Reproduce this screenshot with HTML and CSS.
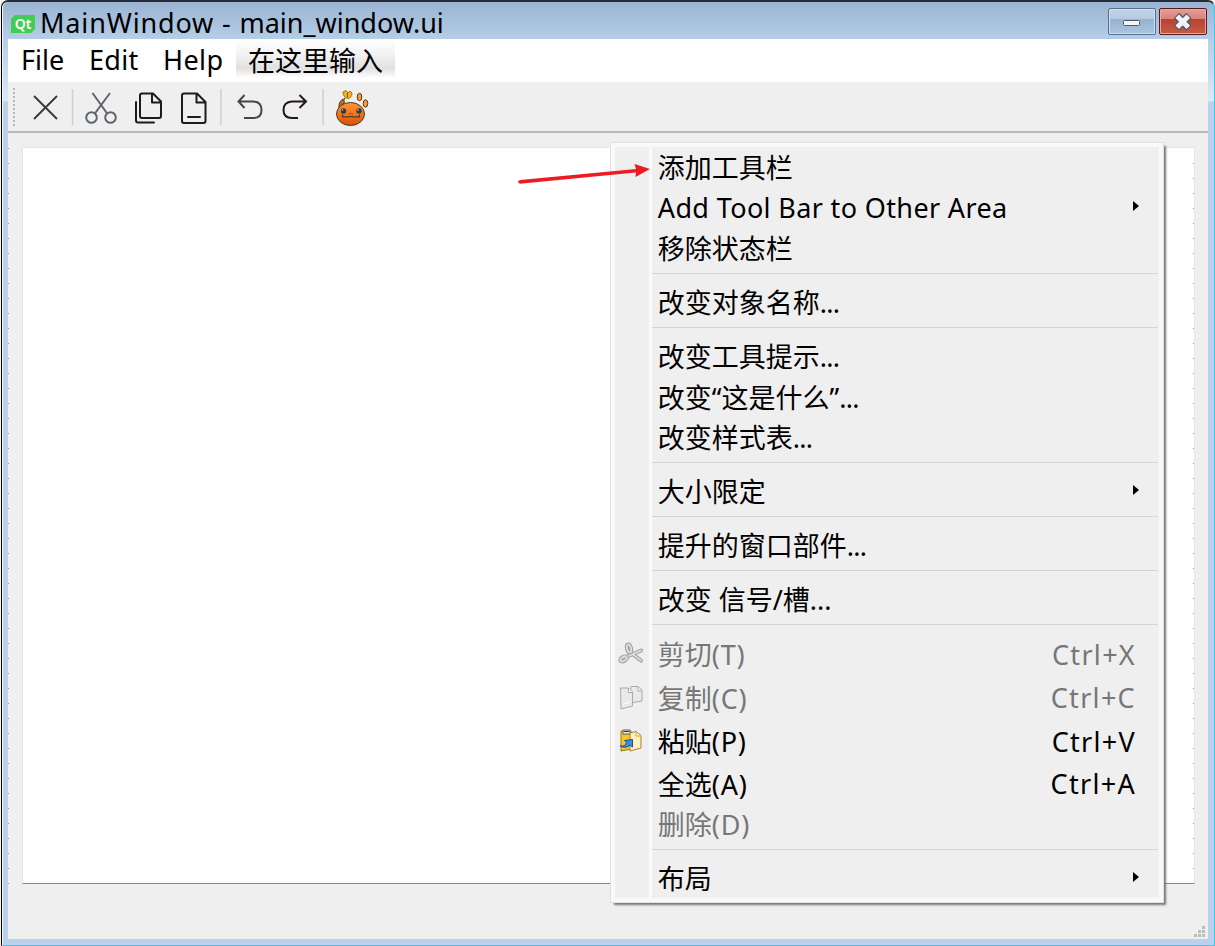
FILE: index.html
```
<!DOCTYPE html>
<html lang="zh-CN">
<head>
<meta charset="utf-8">
<title>MainWindow - main_window.ui</title>
<link rel="stylesheet" href="styles.css">
</head>
<body>
<div class="window">
  <header class="titlebar">
    <svg class="qt" width="24" height="18" viewBox="0 0 24 18"><path d="M4 0H24V14L20 18H0V4Z" fill="#41cd52"/><text x="12" y="13.500" text-anchor="middle" class="qt-text">Qt</text></svg>
    <span class="title"><span class="app">MainWindow - </span>main_window.ui</span>
    <div class="controls">
      <div class="control minimize"><svg width="46" height="25" viewBox="0 0 46 25"><rect x="14.500" y="11.500" width="16" height="5" rx="1" fill="#f5f5f5" stroke="#53566b"/></svg></div>
      <div class="control close"><svg width="46" height="25" viewBox="0 0 46 25"><path d="M16.500 6.500L29 19M29 6.500L16.500 19" stroke="#54566b" stroke-width="7.500"/><path d="M17.200 7.200L28.300 18.300M28.300 7.200L17.200 18.300" stroke="#f3f3f3" stroke-width="5"/></svg></div>
    </div>
  </header>
  <main class="client">
    <nav class="menubar"><span class="m-file">File</span><span class="m-edit">Edit</span><span class="m-help">Help</span><span class="m-type">在这里输入</span></nav>
    <div class="toolbar">
      <svg width="380" height="49" viewBox="8 82 380 49" fill="none">
        <path d="M14 88V127" stroke="#b4b4b4" stroke-width="2" stroke-dasharray="2 2"/>
        <path d="M72.500 89V125M221 89V125M323 89V125" stroke="#cfcfcf" stroke-width="1.500"/>
        <path d="M34 96L57 119M57 96L34 119" stroke="#3a3a3c" stroke-width="1.900"/>
        <g stroke="#5f656f" stroke-width="2"><path d="M92.500 93L107.500 114M110 93L94.500 114"/><circle cx="91.500" cy="117.500" r="5.300"/><circle cx="110.500" cy="117.500" r="5.300"/></g>
        <g stroke="#1c1c1e" stroke-width="2" stroke-linejoin="round" stroke-linecap="round"><path d="M142 93.500H153L161 101.500V116Q161 118 159 118H142Q140 118 140 116V95.500Q140 93.500 142 93.500ZM152 94V102.500H160.500M136 102V120.500Q136 122.500 138 122.500H154"/><path d="M184 93.500H197L205.500 102V121Q205.500 123 203.500 123H184Q182 123 182 121V95.500Q182 93.500 184 93.500ZM196.500 94V102.500H205M188 117H200"/></g>
        <g stroke-width="2"><path d="M244.500 95L238.500 101.500L244.500 108M239 101.500H253.500Q261.500 102 261.500 110Q261.500 118 253.500 118H244" stroke="#47474a"/><path d="M299.500 95L306 101.500L299.500 108M305 101.500H292Q283.500 102 283.500 110Q283.500 118 292 118H298" stroke="#241819"/></g>
        <g stroke="#4b3b31" stroke-width="1"><path d="M339 109Q338 102 343 99L344.500 102Q342 104 343 108Z" fill="#ce6619"/><path d="M343 92L346 90.500L348 93L350 91L352 93Q352 98 347.500 98.500Q343 97 343 92Z" fill="#f6ae1b" stroke="#a5741c"/><path d="M347.500 93V97.500" stroke="#716019"/><path d="M345 98L343 101" stroke="#716019" stroke-width="1.500"/><ellipse cx="359.500" cy="97" rx="2.300" ry="3.700" fill="#ff9f16"/><ellipse cx="365.500" cy="103.500" rx="2.300" ry="3.700" fill="#ff9f16"/><ellipse cx="350.500" cy="114" rx="14" ry="11.500" fill="url(#orange)"/></g>
        <circle cx="343.500" cy="111" r="2.700" fill="#273d4c"/><circle cx="359" cy="111" r="2.700" fill="#273d4c"/><circle cx="342.500" cy="110" r=".8" fill="#a9d4e8"/><circle cx="358" cy="110" r=".8" fill="#a9d4e8"/>
        <path d="M342.500 114.500V117.500M359.500 114.500V117.500M342.500 116.500Q346 117.500 350.500 116.500Q355 117.500 359.500 116.500" stroke="#363b3d" stroke-width="1.200"/><path d="M348 114.500L350.500 113L353 114.500" stroke="#c84a0d"/>
        <defs><linearGradient id="orange" x2="0" y2="1"><stop stop-color="#ff9630"/><stop offset=".45" stop-color="#f77818"/><stop offset="1" stop-color="#d94e09"/></linearGradient></defs>
      </svg>
    </div>
    <div class="workspace"><i class="ticks"></i><div class="form"><i class="ticks right"></i></div></div>
    <svg class="grip" width="12" height="12" fill="#bdbdbd"><path d="M8 0h3v3h-3zM4 4h3v3h-3zM8 4h3v3h-3zM0 8h3v3h-3zM4 8h3v3h-3zM8 8h3v3h-3z"/></svg>
  </main>
</div>
<div class="popup">
  <div class="item"><span>添加工具栏</span></div>
  <div class="item"><span class="add">Add Tool Bar to Other Area</span><svg class="arrow" width="6" height="10"><path d="M0 0L6 5L0 10Z"/></svg></div>
  <div class="item"><span>移除状态栏</span></div>
  <div class="sep"></div>
  <div class="item"><span>改变对象名称<b>...</b></span></div>
  <div class="sep"></div>
  <div class="item"><span>改变工具提示<b>...</b></span></div>
  <div class="item"><span>改变“这是什么”<b>...</b></span></div>
  <div class="item"><span>改变样式表<b>...</b></span></div>
  <div class="sep"></div>
  <div class="item"><span>大小限定</span><svg class="arrow" width="6" height="10"><path d="M0 0L6 5L0 10Z"/></svg></div>
  <div class="sep"></div>
  <div class="item"><span>提升的窗口部件<b>...</b></span></div>
  <div class="sep"></div>
  <div class="item"><span>改变 信号/槽...</span></div>
  <div class="sep"></div>
  <div class="item tall disabled"><svg class="icon" width="26" height="26" viewBox="0 0 26 26" fill="none" stroke-linecap="round"><g stroke="#9c9c9c" stroke-width="4"><path d="M13 12L23 19.500M23 9.500L8 16"/></g><g stroke="#dadada" stroke-width="2"><path d="M13 12L23 19.500M23 9.500L8 16"/></g><g stroke="#9c9c9c" stroke-width="4"><ellipse cx="11" cy="7.500" rx="2" ry="4" transform="rotate(-15 11 7.500)"/><ellipse cx="5.500" cy="18" rx="3.500" ry="2" transform="rotate(-30 5.500 18)"/></g><g stroke="#dcdcdc" stroke-width="2"><ellipse cx="11" cy="7.500" rx="2" ry="4" transform="rotate(-15 11 7.500)"/><ellipse cx="5.500" cy="18" rx="3.500" ry="2" transform="rotate(-30 5.500 18)"/></g></svg><span>剪切<b class="mnemonic">(T)</b></span><span class="key">Ctrl+X</span></div>
  <div class="item tall disabled"><svg class="icon" width="26" height="26" viewBox="0 0 26 26" stroke="#aaa" fill="#e9e9e9"><path d="M13 1.500H20L24 5V16L12 18Z"/><path d="M20 2V6H24" fill="#fafafa"/><path d="M2.500 3H10.500L14.500 7V21L3 24Z"/><path d="M10.500 3V7.500H14.500" fill="#fafafa"/><path d="M5 19L12 17" stroke="#fff"/></svg><span>复制<b class="mnemonic">(C)</b></span><span class="key">Ctrl+C</span></div>
  <div class="item tall"><svg class="icon" width="26" height="26" viewBox="0 0 26 26"><path d="M3 3H13V21L3 23Z" fill="#f1c928" stroke="#9b7a0b"/><path d="M5 2H12V6H5Z" fill="#eee" stroke="#625b49"/><path d="M6 3.500H11" stroke="#333"/><path d="M12 5L18 3.500L23 7.500V20L12 23Z" fill="#fff1bf" stroke="#ac8128"/><path d="M18 4V8H22.500" fill="#fffbe7" stroke="#ca9f44"/><path d="M2 18Q7 19 8.500 14.500L6.500 12.500L14.500 11.500V19L12 17Q8 21 2 18Z" fill="#398ce7" stroke="#174fa0"/></svg><span>粘贴<b class="mnemonic">(P)</b></span><span class="key">Ctrl+V</span></div>
  <div class="item"><span>全选<b class="mnemonic">(A)</b></span><span class="key">Ctrl+A</span></div>
  <div class="item disabled"><span>删除<b class="mnemonic">(D)</b></span></div>
  <div class="sep"></div>
  <div class="item"><span>布局</span><svg class="arrow" width="6" height="10"><path d="M0 0L6 5L0 10Z"/></svg></div>
</div>
<svg class="pointer" width="140" height="40" viewBox="515 155 140 40"><path d="M520 180L636 169L634.500 164L650 169L635.500 177L636 172.500L520 183.700Q516 182 520 180Z" fill="#ed1c24"/></svg>
</body>
</html>
```
FILE: styles.css
```
* { box-sizing: border-box; }
body { margin: 0; width: 1215px; height: 946px; overflow: hidden; position: relative; background: #f4f4f4; font: 27px/40px "Noto Sans", "Noto Sans CJK SC", sans-serif; color: #000; white-space: nowrap; }
.window { height: 946px; margin-left: 1px; border: solid #30d0e8; border-width: 2px 1px 1px 1px; border-top-color: #2b2d36; border-left-color: #000; padding: 0 6px 0 6px; border-radius: 7px 7px 0 0; box-shadow: inset 1px 0 #f4f8fc; background: linear-gradient(#9ab4d2, #b5cfe8 38px, #dce8f5 99px, #b9d1ea 100px); }
.titlebar { height: 37px; display: flex; padding-left: 3px; }
.qt { margin-top: 13px; flex: none; }
.qt-text { font: 600 14px "Noto Sans", sans-serif; fill: #fff; }
.title { margin-left: 5px; line-height: 42px; height: 37px; }
.app { letter-spacing: .85px; }
.controls { margin-left: auto; display: flex; gap: 3px; padding: 6px 1px 0 0; }
.control { width: 48px; height: 27px; border: 1px solid #58708f; border-radius: 2px; box-shadow: inset 0 0 0 1px #d0e0f0; background: linear-gradient(#c1d5e9, #b4cbe2 39%, #98b2ce 40%, #a9c5df); }
.control svg { display: block; }
.close { border-color: #521b24; box-shadow: inset 0 0 0 1px #eaa89e; background: linear-gradient(#e69d94, #d98478 39%, #b84330 40%, #c85b44); }
.client { height: 900px; background: #efefef; position: relative; }
.menubar { height: 43px; display: flex; background: #fff; padding-left: 13px; line-height: 42px; }
.m-file { width: 68px; }
.m-edit { width: 74px; letter-spacing: .3px; }
.m-help { width: 73px; letter-spacing: .4px; }
.m-type { width: 159px; height: 39px; padding-left: 12px; line-height: 44px; background: linear-gradient(#fff, #f2f2f2 40%, #e0e0e0 75%, #fff); }
.toolbar { height: 51px; border-bottom: 2px solid #b8b8b8; }
.toolbar svg { display: block; }
.workspace { padding: 14px 13px 0 14px; position: relative; }
.form { height: 737px; background: #fff; border: 1px solid #e5e5e5; border-bottom-color: #868686; position: relative; }
.ticks { position: absolute; left: 0; top: 15px; width: 1px; height: 736px; background: repeating-linear-gradient(#999 0 1px, transparent 1px 15px); }
.ticks.right { left: auto; right: 0; top: 15px; height: 716px; }
.grip { position: absolute; right: 2px; bottom: 1px; }
.popup { position: absolute; left: 610px; top: 142px; width: 554px; height: 761px; border: 1px solid #e0e0e0; padding: 4px; box-shadow: 3px 3px 2px -1px #777; background: linear-gradient(90deg, #efefef 34px, #f9f9f9 34px 37px, #efefef 37px) content-box, #f9f9f9; }
.item { height: 40.5px; position: relative; padding: 0 23px 0 42.8px; display: flex; align-items: center; }
.item span { line-height: 38px; padding-top: 2px; }
.item b { font-weight: 400; letter-spacing: -.7px; }
.item .mnemonic { letter-spacing: .8px; }
.item .add { letter-spacing: .36px; padding-top: 0; }
.tall { height: 43.5px; }
.tall span { padding-top: 1px; }
.disabled { color: #777; }
.sep { height: 13.5px; padding: 4px 1px 0 37px; }
.sep::before { content: ""; display: block; height: 1px; background: #d4d4d4; }
.arrow { margin: 0 -3px 3px auto; }
.item .key { margin-left: auto; padding-top: 0; letter-spacing: 1.3px; }
.icon { position: absolute; left: 3px; top: 8px; }
.pointer { position: absolute; left: 515px; top: 155px; }
```
